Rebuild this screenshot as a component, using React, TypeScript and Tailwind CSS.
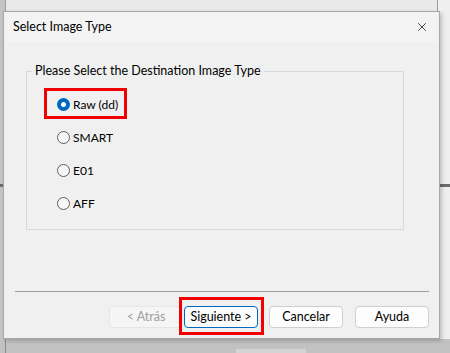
import { X } from 'lucide-react';

const font = { fontFamily: 'Lato, "Noto Sans", Arial, sans-serif' };

function Radio({ checked }: { checked?: boolean }) {
    if (checked) {
        return (
            <span className="flex h-[13px] w-[13px] items-center justify-center rounded-full bg-[#0067c0]">
                <span className="h-[5px] w-[5px] rounded-full bg-white" />
            </span>
        );
    }
    return <span className="h-[13px] w-[13px] rounded-full border border-[#5f5f5f] bg-[#f7f7f7]" />;
}

function Option({ label, checked, marked }: { label: string; checked?: boolean; marked?: boolean }) {
    return (
        <div className="relative flex h-[33px] items-center gap-[3px] pl-[13px]">
            {marked && (
                <span className="pointer-events-none absolute left-0 top-0 h-[31px] w-[83px] border-[3px] border-[#f00000]" />
            )}
            <Radio checked={checked} />
            <span className="text-[12px] text-black">{label}</span>
        </div>
    );
}

function Button({ label, primary, disabled, marked }: { label: string; primary?: boolean; disabled?: boolean; marked?: boolean }) {
    let cls = 'border-[#d0d0d0] bg-[#fdfdfd] text-black';
    if (primary) cls = 'border-[#0067c0] bg-[#fdfdfd] text-black';
    if (disabled) cls = 'border-[#e6e6e6] bg-[#f5f5f5] text-[#a0a0a0]';
    return (
        <div className="relative">
            {marked && (
                <span className="pointer-events-none absolute -left-[5px] -top-[9px] h-[38px] w-[85px] border-[3px] border-[#f00000]" />
            )}
            <button className={`flex h-[22px] w-[74px] items-center justify-center rounded-[4px] border text-[12.5px] ${cls}`}>
                {label}
            </button>
        </div>
    );
}

export default function App() {
    return (
        <div className="relative h-[353px] w-[450px] overflow-hidden bg-[#c4c4c4]" style={font}>
            {/* window behind */}
            <div className="absolute left-[5px] top-0 h-[353px] w-[433px] border-x border-[#9c9c9c] bg-[#e9e9e9]" />
            <div className="absolute left-[438px] top-0 h-[353px] w-[12px] bg-[#efefef]" />
            <div className="absolute left-0 top-[184px] h-[3px] w-[450px] bg-[#6c6c6c]" />
            <div className="absolute left-0 top-[339px] h-[14px] w-[450px] bg-[#c2c2c2]" />
            <div className="absolute left-[5px] top-[339px] h-[14px] w-px bg-[#8c8c8c]" />
            <div className="absolute left-[236px] top-[349px] h-[4px] w-[70px] bg-[#d4d4d4]" />

            {/* dialog */}
            <div className="absolute left-[3px] top-[11px] flex h-[328px] w-[437px] flex-col border border-[#a7a7a7] bg-[#f0f0f0] shadow-[2px_2px_4px_rgba(0,0,0,0.2)]">
                <div className="flex h-[30px] items-center justify-between bg-[#f3f3f3] pl-[9px] pr-[10px]">
                    <span className="text-[12.5px] text-black">Select Image Type</span>
                    <X className="h-[14px] w-[14px] text-black" strokeWidth={1.2} />
                </div>

                <div className="relative ml-[22px] mt-[29px] h-[159px] w-[378px] border border-[#d9d9d9] pl-[17px] pt-[16px]">
                    <span className="absolute -top-[9px] left-[5px] bg-[#f0f0f0] px-[3px] text-[12.5px] leading-[16px] text-black">
                        Please Select the Destination Image Type
                    </span>
                    <div className="flex flex-col">
                        <Option label="Raw (dd)" checked marked />
                        <Option label="SMART" />
                        <Option label="E01" />
                        <Option label="AFF" />
                    </div>
                </div>

                <div className="ml-[11px] mt-[61px] h-px w-[414px] bg-[#a0a0a0]" />

                <div className="ml-[105px] mt-[14px] flex">
                    <Button label="< Atrás" disabled />
                    <div className="ml-[1px]">
                        <Button label="Siguiente >" primary marked />
                    </div>
                    <div className="ml-[11px]">
                        <Button label="Cancelar" />
                    </div>
                    <div className="ml-[12px]">
                        <Button label="Ayuda" />
                    </div>
                </div>
            </div>
        </div>
    );
}
